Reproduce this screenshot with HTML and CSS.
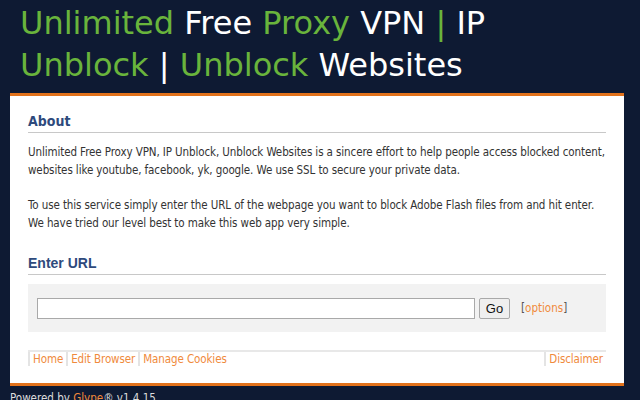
FILE: index.html
```html
<!DOCTYPE html>
<html>
<head>
<meta charset="utf-8">
<link rel="stylesheet" href="styles.css">
</head>
<body>
<header class="top">
  <h1 class="title"><span class="g">Unlimited</span> <span class="w">Free</span> <span class="g">Proxy</span> <span class="w">VPN</span> <span class="g">|</span> <span class="w">IP</span><br><span class="g">Unblock</span> <span class="w">|</span> <span class="g">Unblock</span> <span class="w">Websites</span></h1>
</header>
<main class="panel">
  <h2 class="sec">About</h2>
  <p class="txt">Unlimited Free Proxy VPN, IP Unblock, Unblock Websites is a sincere effort to help people access blocked content, websites like youtube, facebook, yk, google. We use SSL to secure your private data.</p>
  <p class="txt">To use this service simply enter the URL of the webpage you want to block Adobe Flash files from and hit enter. We have tried our level best to make this web app very simple.</p>
  <h2 class="sec sec-url">Enter URL</h2>
  <form class="urlbox">
    <input class="url" type="text">
    <button class="go" type="button">Go</button>
    <span class="opts">[<a href="#">options</a>]</span>
  </form>
  <nav class="foot">
    <div class="links">
      <a href="#">Home</a><a href="#">Edit Browser</a><a href="#">Manage Cookies</a>
    </div>
    <div class="links"><a href="#">Disclaimer</a></div>
  </nav>
</main>
<p class="powered">Powered by <a href="#">Glype</a>® v1.4.15</p>
</body>
</html>
```
FILE: styles.css
```css
html, body { margin: 0; padding: 0; }
body {
  background: #0e1a33;
  font-family: "DejaVu Sans Condensed", "Liberation Sans", sans-serif;
  width: 640px;
  height: 400px;
  overflow: hidden;
}
.top { padding: 2px 0 0 20px; height: 91px; }
.title {
  margin: 0;
  font-family: "DejaVu Sans", "Liberation Sans", sans-serif;
  font-weight: normal;
  font-size: 32px;
  line-height: 42px;
}
.g { color: #69b43c; }
.w { color: #ffffff; }
.panel {
  margin: 0 16px 0 10px;
  background: #fff;
  border-top: 3px solid #e2721b;
  border-bottom: 3px solid #e2721b;
  padding: 14px 18px 17px 18px;
}
.sec {
  margin: 0;
  font-size: 14px;
  line-height: 22px;
  color: #2e4a7c;
  font-weight: bold;
  border-bottom: 1px solid #c8c8c8;
}
.sec-url {
  font-family: "Liberation Sans", Arial, sans-serif;
  margin-top: 20px;
}
.txt {
  margin: 10px 0 17px;
  font-size: 11.5px;
  letter-spacing: -0.1px;
  line-height: 18px;
  color: #333;
}
.urlbox {
  margin: 9px 0 0;
  background: #f2f2f2;
  height: 48px;
  display: flex;
  align-items: center;
  padding: 0 9px;
}
.url {
  width: 438px;
  height: 21px;
  box-sizing: border-box;
  border: 1px solid #a9a9a9;
  background: #fff;
  margin: 0;
}
.go {
  margin: 0 0 0 4px;
  height: 21px;
  width: 31px;
  padding: 0;
  font-family: "Liberation Sans", Arial, sans-serif;
  font-size: 13px;
  background: #efefef;
  border: 1px solid #a9a9a9;
  border-radius: 2px;
  color: #111;
}
.opts {
  margin-left: 11px;
  font-size: 11.5px;
  color: #555;
}
.opts a, .foot a, .powered a { color: #f08a3c; text-decoration: none; }
.foot {
  margin-top: 18px;
  border-top: 2px solid #e8e8e8;
  display: flex;
  justify-content: space-between;
  font-size: 11.5px;
  letter-spacing: -0.1px;
  line-height: 14px;
}
.links { display: flex; }
.links a {
  border-left: 2px solid #e4e4e4;
  padding: 0 3px 0 3px;
}
.powered {
  margin: 5px 0 0 10px;
  color: #ddd;
  font-size: 11.5px;
}
```
